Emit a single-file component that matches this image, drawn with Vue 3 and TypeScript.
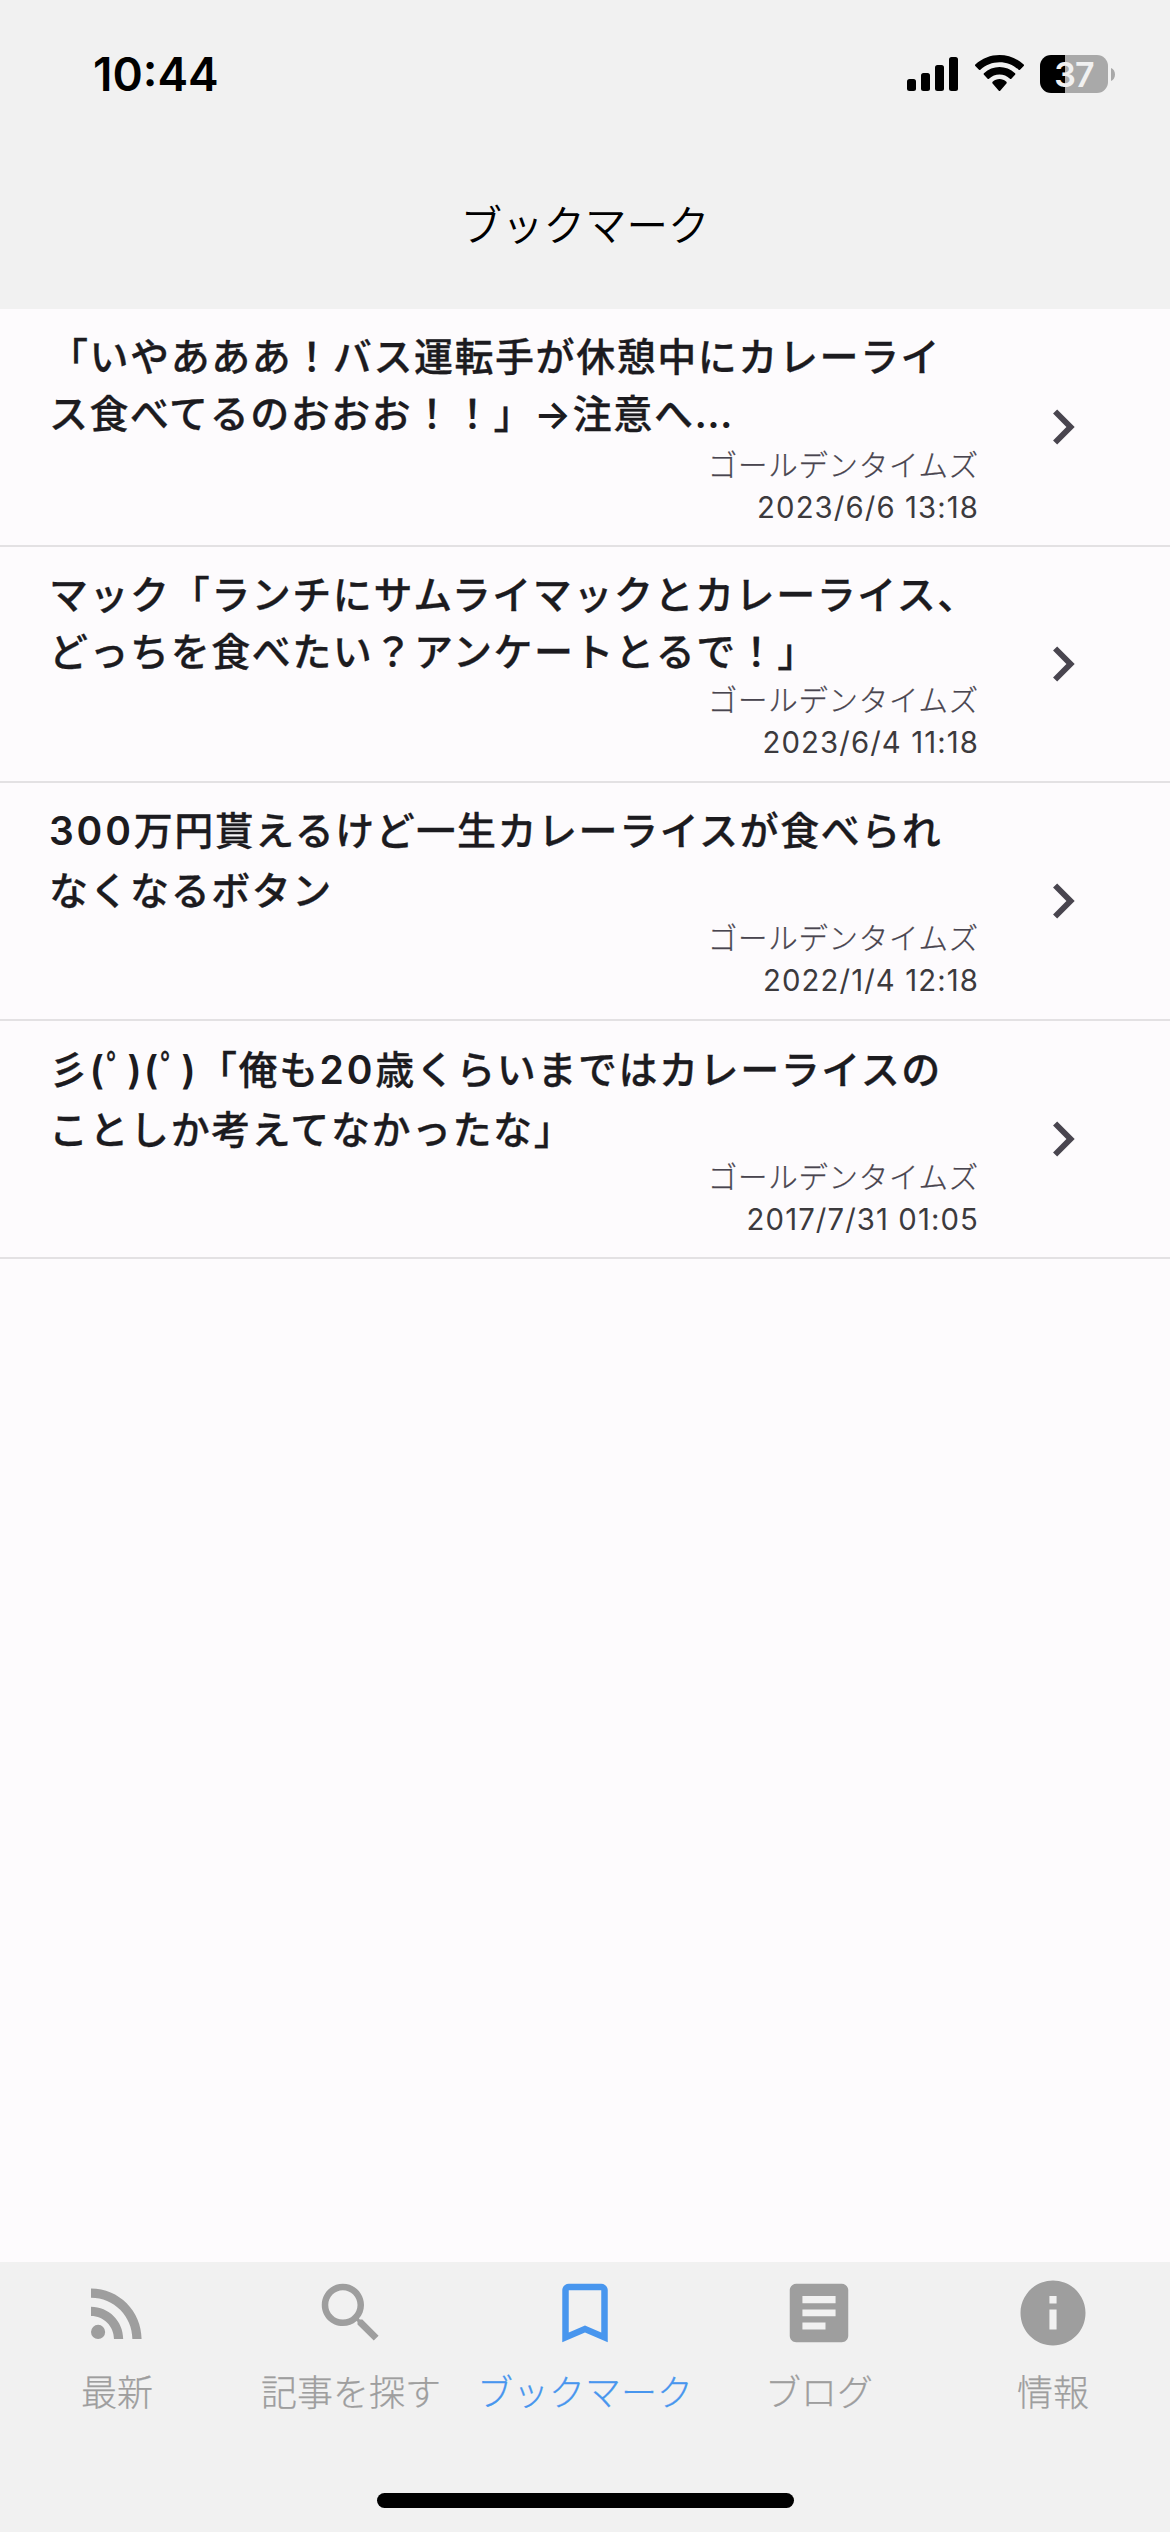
<script setup lang="ts">
interface Segment {
  text: string
  kind?: 'latin' | 'arrow' | 'dots' | 'paren' | 'mark'
}

interface Bookmark {
  id: number
  lines: Segment[][]
  source: string
  date: string
}

interface Tab {
  label: string
  icon: string
  active?: boolean
}

const bookmarks: Bookmark[] = [
  {
    id: 1,
    lines: [
      [{ text: '「いやあああ！バス運転手が休憩中にカレーライ' }],
      [
        { text: 'ス食べてるのおおお！！」' },
        { text: '→', kind: 'arrow' },
        { text: '注意へ' },
        { text: '...', kind: 'dots' },
      ],
    ],
    source: 'ゴールデンタイムズ',
    date: '2023/6/6 13:18',
  },
  {
    id: 2,
    lines: [
      [{ text: 'マック「ランチにサムライマックとカレーライス、' }],
      [{ text: 'どっちを食べたい？アンケートとるで！」' }],
    ],
    source: 'ゴールデンタイムズ',
    date: '2023/6/4 11:18',
  },
  {
    id: 3,
    lines: [
      [{ text: '300', kind: 'latin' }, { text: '万円貰えるけど一生カレーライスが食べられ' }],
      [{ text: 'なくなるボタン' }],
    ],
    source: 'ゴールデンタイムズ',
    date: '2022/1/4 12:18',
  },
  {
    id: 4,
    lines: [
      [
        { text: '彡' },
        { text: '(', kind: 'paren' },
        { text: 'ﾟ', kind: 'mark' },
        { text: ')(', kind: 'paren' },
        { text: 'ﾟ', kind: 'mark' },
        { text: ')', kind: 'paren' },
        { text: '「俺も' },
        { text: '20', kind: 'latin' },
        { text: '歳くらいまではカレーライスの' },
      ],
      [{ text: 'ことしか考えてなかったな」' }],
    ],
    source: 'ゴールデンタイムズ',
    date: '2017/7/31 01:05',
  },
]

const tabs: Tab[] = [
  {
    label: '最新',
    icon: 'M4 17.82a2.18 2.18 0 1 0 4.36 0a2.18 2.18 0 1 0-4.36 0zM4 4.44v2.83c7.03 0 12.73 5.7 12.73 12.73h2.83c0-8.59-6.97-15.56-15.56-15.56zm0 5.66v2.83c3.9 0 7.07 3.17 7.07 7.07h2.83c0-5.47-4.43-9.9-9.9-9.9z',
  },
  {
    label: '記事を探す',
    icon: 'M15.5 14h-.79l-.28-.27C15.41 12.59 16 11.11 16 9.5 16 5.91 13.09 3 9.5 3S3 5.91 3 9.5 5.91 16 9.5 16c1.61 0 3.09-.59 4.23-1.57l.27.28v.79l5 4.99L20.49 19l-4.99-5zm-6 0C7.01 14 5 11.99 5 9.5S7.01 5 9.5 5 14 7.01 14 9.5 11.99 14 9.5 14z',
  },
  {
    label: 'ブックマーク',
    icon: 'M17 3H7c-1.1 0-1.99.9-1.99 2L5 21l7-3 7 3V5c0-1.1-.9-2-2-2zm0 15l-5-2.18L7 18V5h10v13z',
    active: true,
  },
  {
    label: 'ブログ',
    icon: 'M19 3H5c-1.1 0-2 .9-2 2v14c0 1.1.9 2 2 2h14c1.1 0 2-.9 2-2V5c0-1.1-.9-2-2-2zm-5 14.1H6.9v-2.2H14v2.2zm3.1-4.1H6.9v-2.1h10.2V13zm0-4H6.9V6.8h10.2V9z',
  },
  {
    label: '情報',
    icon: 'M12 2C6.48 2 2 6.48 2 12s4.48 10 10 10 10-4.48 10-10S17.52 2 12 2zm1.1 15.1h-2.2v-6.2h2.2v6.2zm0-8h-2.2V6.8h2.2v2.3z',
  },
]
</script>

<template>
  <div class="screen">
    <header class="top">
      <div class="status">
        <span class="time">10:44</span>
        <div class="indicators">
          <svg class="signal" viewBox="0 0 51 34">
            <rect x="0" y="22" width="9" height="12" rx="2.5" />
            <rect x="14" y="16" width="9" height="18" rx="2.5" />
            <rect x="28" y="8" width="9" height="26" rx="2.5" />
            <rect x="42" y="0" width="9" height="34" rx="2.5" />
          </svg>
          <svg class="wifi" viewBox="0 0 17.14 12.33" preserveAspectRatio="none">
            <path
              d="M8.5713 2.46628C11.0584 2.46639 13.4504 3.38847 15.2529 5.04195C15.3887 5.1696 15.6056 5.16799 15.7393 5.03834L17.0368 3.77487C17.1045 3.70911 17.1422 3.62004 17.1417 3.52735C17.1411 3.43467 17.1023 3.34603 17.0338 3.28104C12.3028 -1.09368 4.83907 -1.09368 0.108056 3.28104C0.039524 3.34598 0 3.4346 0 3.52728C0 3.61996 0.0370483 3.70906 0.104689 3.77487L1.40255 5.03834C1.53615 5.16819 1.75327 5.1698 1.88893 5.04195C3.69167 3.38836 6.08395 2.46628 8.5713 2.46628ZM8.56795 6.68656C9.92527 6.68647 11.2341 7.19821 12.2403 8.12234C12.3763 8.25347 12.5907 8.25062 12.7234 8.11594L14.0106 6.79682C14.0784 6.72774 14.1159 6.63402 14.1149 6.53652C14.1138 6.43903 14.0742 6.34606 14.0051 6.27827C10.9416 3.4025 6.19688 3.4025 3.13339 6.27827C3.06417 6.34606 3.02459 6.43907 3.02363 6.53659C3.02267 6.6341 3.06041 6.72779 3.12843 6.79682L4.41519 8.11594C4.54791 8.25062 4.76229 8.25347 4.89833 8.12234C5.90386 7.19882 7.21163 6.68713 8.56795 6.68656ZM11.0924 9.48011C11.0943 9.58546 11.0572 9.68703 10.9898 9.76084L8.81327 12.2156C8.74946 12.2877 8.66247 12.3283 8.5717 12.3283C8.48093 12.3283 8.39394 12.2877 8.33013 12.2156L6.15323 9.76084C6.08589 9.68697 6.04891 9.58537 6.05102 9.48002C6.05312 9.37468 6.09411 9.27505 6.16432 9.20465C7.55421 7.89896 9.58919 7.89896 10.9791 9.20465C11.0492 9.27511 11.0904 9.37476 11.0924 9.48011Z"
            />
          </svg>
          <div class="battery">
            <span class="cell">37</span>
            <svg class="tip" viewBox="0 0 4 13"><path d="M0 0C2.6 1 4 3.6 4 6.5S2.6 12 0 13z" /></svg>
          </div>
        </div>
      </div>
      <h1 class="heading">ブックマーク</h1>
    </header>

    <main class="list">
      <article v-for="item in bookmarks" :key="item.id" class="row" :class="'row-' + item.id">
        <div class="body">
          <h2 class="title">
            <span v-for="(line, i) in item.lines" :key="i" class="line"
              ><span v-for="(seg, j) in line" :key="j" :class="seg.kind">{{ seg.text }}</span></span
            >
          </h2>
          <p class="source">{{ item.source }}</p>
          <p class="date">{{ item.date }}</p>
        </div>
        <svg class="chevron" viewBox="0 0 24 24">
          <path d="M10 6L8.59 7.41 13.17 12l-4.58 4.59L10 18l6-6z" />
        </svg>
      </article>
    </main>

    <footer class="bottom">
      <nav class="tabs">
        <div v-for="tab in tabs" :key="tab.label" class="tab" :class="{ active: tab.active }">
          <svg class="tab-icon" viewBox="0 0 24 24"><path :d="tab.icon" fill-rule="evenodd" /></svg>
          <span class="tab-label">{{ tab.label }}</span>
        </div>
      </nav>
      <div class="home"></div>
    </footer>
  </div>
</template>

<style>
body {
  margin: 0;
  background: #fdfbfd;
}
</style>

<style scoped>
.screen {
  width: 1170px;
  height: 2532px;
  display: flex;
  flex-direction: column;
  overflow: hidden;
  background: #fdfbfd;
  font-family: 'Noto Sans CJK JP', sans-serif;
  color: #1c1b1f;
}

.top {
  height: 309px;
  flex: none;
  background: #f1f1f1;
}

.status {
  height: 148px;
  box-sizing: border-box;
  padding: 0 55px 0 93px;
  display: flex;
  justify-content: space-between;
  align-items: center;
}

.time {
  font: 600 46px/56px Inter, sans-serif;
  letter-spacing: 0;
  color: #000;
}

.indicators {
  display: flex;
  align-items: center;
}

.signal {
  width: 51px;
  height: 34px;
}

.wifi {
  width: 49px;
  height: 36px;
  margin: -2px 16.5px 0 16.5px;
}

.battery {
  display: flex;
  align-items: center;
  gap: 3px;
}

.cell {
  width: 68px;
  height: 38px;
  border-radius: 11px;
  background: linear-gradient(90deg, #000 0 25px, #a9a9a9 25px);
  color: #f1f1f1;
  font: 600 34px/39px Inter, sans-serif;
  letter-spacing: -0.8px;
  text-align: center;
}

.tip {
  width: 4px;
  height: 13px;
  fill: #a9a9a9;
}

.heading {
  margin: 0;
  height: 151px;
  font-size: 41.5px;
  line-height: 151px;
  font-weight: 350;
  text-align: center;
  color: #000;
}

.list {
  flex: 1;
}

.row {
  height: 238px;
  box-sizing: border-box;
  border-bottom: 2px solid #e3e1e3;
  display: flex;
  align-items: center;
}

.row-2 {
  height: 236px;
}

.body {
  width: 979px;
  height: 100%;
  flex: none;
}

.title {
  margin: 0;
  padding: 17px 0 0 49px;
  font-size: 39px;
  font-weight: 500;
  letter-spacing: 1.55px;
  white-space: pre;
  -webkit-text-stroke: 0.3px currentColor;
}

.line {
  display: block;
  height: 57px;
  line-height: 57px;
}

.row-3 .line,
.row-4 .line {
  height: 60px;
  line-height: 60px;
}

.row-3 .title {
  padding-top: 15px;
  margin-bottom: -5px;
}

.row-4 .title {
  padding-top: 16px;
  margin-bottom: -5px;
}

.row-2 .title {
  margin-bottom: -3px;
}

.latin,
.arrow,
.dots,
.paren {
  font-family: Inter, sans-serif;
  font-weight: 600;
  -webkit-text-stroke: 0;
}

.latin {
  letter-spacing: 2.8px;
}

.dots {
  letter-spacing: 0.3px;
}

.paren {
  letter-spacing: 2px;
}

.source,
.date {
  margin: 0;
  text-align: right;
}

.source {
  height: 45.5px;
  font-size: 29.5px;
  line-height: 46px;
  font-weight: 300;
  letter-spacing: 0.7px;
  color: #49454f;
  -webkit-text-stroke: 0.25px currentColor;
}

.date {
  height: 44px;
  font: 400 29.3px/44px Inter, sans-serif;
  letter-spacing: 1.1px;
  color: #3c3a3d;
}

.chevron {
  width: 70px;
  height: 70px;
  margin-left: 49px;
  fill: #49454f;
}

.bottom {
  height: 270px;
  flex: none;
  background: #f1f1f1;
}

.tabs {
  height: 231px;
  display: flex;
}

.tab {
  width: 234px;
  padding-top: 12px;
  box-sizing: border-box;
  display: flex;
  flex-direction: column;
  align-items: center;
  color: #9e9e9e;
  fill: #9e9e9e;
}

.tab.active {
  color: #4896ee;
  fill: #4896ee;
}

.tab-icon {
  width: 78px;
  height: 78px;
}

.tab-label {
  margin-top: 10.5px;
  font-size: 36px;
  line-height: 54px;
  font-weight: 300;
  white-space: nowrap;
  -webkit-text-stroke: 0.25px currentColor;
}

.home {
  width: 417px;
  height: 15px;
  margin: 0 auto;
  border-radius: 8px;
  background: #000;
}
</style>
